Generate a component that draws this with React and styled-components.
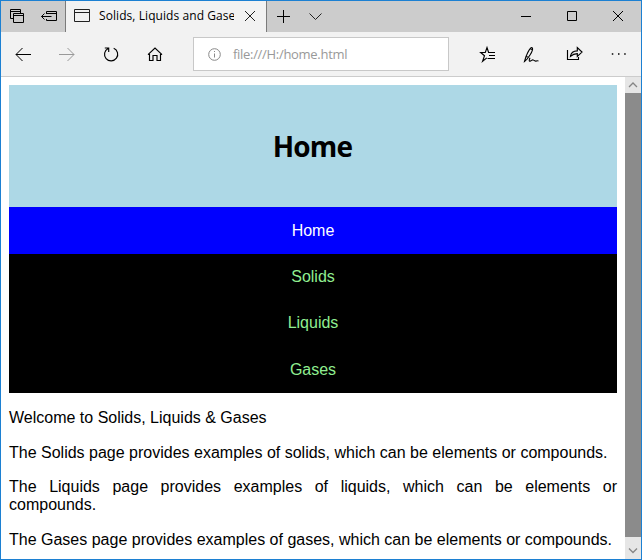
import React from "react";
import styled, { createGlobalStyle } from "styled-components";

const GlobalStyle = createGlobalStyle`
  * { box-sizing: border-box; }
  body { margin: 0; overflow: hidden; }
`;

const BrowserWindow = styled.div`
  display: flex;
  flex-direction: column;
  width: 642px;
  height: 560px;
  border: 1px solid #1c80d2;
  background: #fff;
  overflow: hidden;
`;

const TitleBar = styled.header`
  display: flex;
  flex: 0 0 31px;
  background: #ccc;
`;

const Spacer = styled.div`
  flex: 1;
`;

const Tab = styled.div`
  display: flex;
  width: 202px;
  background: #f2f2f2;
  border-left: 1px solid #7b7b7b;
  border-right: 1px solid #7b7b7b;
`;

const TabTitle = styled.div`
  width: 135px;
  margin-right: 1px;
  overflow: hidden;
  white-space: nowrap;
  font: 12px/30px "Open Sans", "Noto Sans", sans-serif;
  letter-spacing: 0.07px;
  color: #000;
`;

const Toolbar = styled.nav`
  display: flex;
  flex: 0 0 45px;
  background: #f2f2f2;
  border-bottom: 1px solid #ccc;
`;

const AddressBar = styled.div`
  display: flex;
  width: 256px;
  height: 34px;
  margin: 5px 16px 0;
  background: #fff;
  border: 1px solid #c8c8c8;
`;

const Address = styled.span`
  font: 13px/33px "Open Sans", "Noto Sans", sans-serif;
  letter-spacing: -0.3px;
  color: #999;
`;

const IconSvg = styled.svg`
  display: block;
  flex: none;
  fill: none;
  stroke: ${(p) => p.$color || "#000"};
  stroke-width: ${(p) => p.$weight || 1};
`;

const Viewport = styled.div`
  display: flex;
  flex: 1;
  min-height: 0;
`;

const Page = styled.main`
  flex: 1;
  padding: 8px 8px 0;
  overflow: hidden;
  font: 16px/18.4px "Liberation Sans", Arial, sans-serif;
  color: #000;
`;

const Banner = styled.div`
  display: flex;
  align-items: center;
  justify-content: center;
  height: 122px;
  background: #add8e6;
`;

const Heading = styled.h1`
  margin: 0;
  font: 700 28px/38px "Open Sans", "Noto Sans", sans-serif;
  letter-spacing: -0.8px;
  padding-right: 1px;
`;

const Menu = styled.ul`
  display: grid;
  grid-template-rows: 47px 46px 46px 47px;
  margin: 0;
  padding: 0;
  list-style: none;
  background: #000;
`;

const MenuItem = styled.li`
  display: grid;
  place-items: end center;
  line-height: 46px;
  color: ${(p) => (p.$active ? "#fff" : "#90ee90")};
  background: ${(p) => (p.$active ? "#00f" : "#000")};
`;

const Paragraph = styled.p`
  margin: 0 0 16px;
  text-align: justify;
`;

const Article = styled.article`
  padding-top: 16.2px;
`;

const Scrollbar = styled.div`
  display: flex;
  flex-direction: column;
  width: 16px;
  background: #e6e6e6;
`;

const ScrollThumb = styled.div`
  height: 444px;
  background: #8b8b8b;
`;

/* Icon paths use window coordinates; x, y, w and h select the slot they occupy. */
function Icon({ x, y, w, h, color, weight, children }) {
  return (
    <IconSvg width={w} height={h} viewBox={`${x} ${y} ${w} ${h}`} $color={color} $weight={weight}>
      {children}
    </IconSvg>
  );
}

function TitleIcon(props) {
  return <Icon y={1} h={31} {...props} />;
}

function ToolIcon(props) {
  return <Icon y={32} h={44} w={44} {...props} />;
}

const menu = ["Home", "Solids", "Liquids", "Gases"];

const paragraphs = [
  "Welcome to Solids, Liquids & Gases",
  "The Solids page provides examples of solids, which can be elements or compounds.",
  "The Liquids page provides examples of liquids, which can be elements or compounds.",
  "The Gases page provides examples of gases, which can be elements or compounds.",
];

export default function App() {
  return (
    <>
      <GlobalStyle />
      <BrowserWindow>
        <TitleBar>
          <TitleIcon x={1} w={32}>
            <path d="M13 18.500h-2.500v-9h10v3.500M10.500 11.500h10M13.500 13.500h10v9h-10zM13.500 15.500h10" />
          </TitleIcon>
          <TitleIcon x={33} w={32}>
            <path d="M46.500 14v-2.500h10v9h-10V19M46.500 13.500h10M41.500 16.500h10M44.500 13.500l-3 3 3 3" />
          </TitleIcon>
          <Tab>
            <TitleIcon x={66} w={33} color="#222">
              <path d="M74.500 9.500h15v12h-15zM74.500 12.500h15" />
            </TitleIcon>
            <TabTitle>Solids, Liquids and Gases</TabTitle>
            <TitleIcon x={235} w={31} color="#222">
              <path d="M245 11l10 10M255 11l-10 10" />
            </TitleIcon>
          </Tab>
          <TitleIcon x={267} w={33}>
            <path d="M277 16.500h13M283.500 10v13" />
          </TitleIcon>
          <TitleIcon x={300} w={31} color="#222">
            <path d="M309.500 13.500l6 6 6-6" />
          </TitleIcon>
          <Spacer />
          <TitleIcon x={503} w={46}>
            <path d="M521 16.500h10" />
          </TitleIcon>
          <TitleIcon x={549} w={46}>
            <path d="M567.500 11.500h9v9h-9z" />
          </TitleIcon>
          <TitleIcon x={595} w={46}>
            <path d="M613 11l10 10M623 11l-10 10" />
          </TitleIcon>
        </TitleBar>
        <Toolbar>
          <ToolIcon x={1}>
            <path d="M16 54.500h15M22.500 48l-6.500 6.500 6.500 6.500" />
          </ToolIcon>
          <ToolIcon x={45} color="#999">
            <path d="M59 54.500h15M67.500 48l6.500 6.500-6.500 6.500" />
          </ToolIcon>
          <ToolIcon x={89} weight={1.150}>
            <path d="M113.700 48.200a6.600 6.600 0 1 1-5.600.200M104.800 48h3.900v3.900" />
          </ToolIcon>
          <ToolIcon x={133} weight={1.150}>
            <path d="M148 54.700l7-6.700 7 6.700M149.500 54v6.500h3.500v-5h4v5h3.500V54" />
          </ToolIcon>
          <AddressBar>
            <Icon x={194} y={38} w={39} h={32} color="#888">
              <circle cx="214.500" cy="54.500" r="5.800" />
              <path d="M214.500 53.500v4M214.500 51v1" />
            </Icon>
            <Address>file:///H:/home.html</Address>
          </AddressBar>
          <ToolIcon x={465} weight={1.150}>
            <path d="M490.500 52.500h-1.900l-1.600-5-1.700 5h-4.600l3.800 3.200-1.900 5.600 4.200-3.400M488 52.500h7M489 55.500h6M487.500 58.500h7.500" />
          </ToolIcon>
          <ToolIcon x={509} weight={1.100}>
            <path d="M524.500 61.500l1.500-5c1.800-4.300 3.500-8.500 5.500-8.900 2.200 0 .700 4.200-1.500 7.400-1.500 2.500-2.800 4.800-5.500 6.500zM526.500 56.500l2 .900M530 48.500l1.900 1M530 57.700c-1 2.300-1.200 4.200.500 3.300 1.500-.8 2-1.800 3.100-.8 1.200 1 1.700 1.300 2.800.7.700-.4 1.200-.2 2.100.1" />
          </ToolIcon>
          <ToolIcon x={553} weight={1.150}>
            <path d="M567.500 50v9.500h11V57M570.500 56.300c.5-3.700 2.600-5.500 6.800-5.500v-3.100l4.700 4.400-4.700 4.400v-2.900c-3 0-4.800.8-6.800 2.700z" />
          </ToolIcon>
          <ToolIcon x={597} weight={1.500}>
            <path d="M611.800 54h1.500M618 54h1.500M624.200 54h1.500" />
          </ToolIcon>
        </Toolbar>
        <Viewport>
          <Page>
            <Banner>
              <Heading>Home</Heading>
            </Banner>
            <Menu>
              {menu.map((label, i) => (
                <MenuItem key={label} $active={i === 0}>{label}</MenuItem>
              ))}
            </Menu>
            <Article>
              {paragraphs.map((text) => (
                <Paragraph key={text}>{text}</Paragraph>
              ))}
            </Article>
          </Page>
          <Scrollbar>
            <Icon x={625} y={77} w={16} h={16} color="#858585" weight={1.300}>
              <path d="M629 87l4-4 4 4" />
            </Icon>
            <ScrollThumb />
            <Icon x={625} y={537} w={16} h={22} color="#858585" weight={1.300}>
              <path d="M629 548.500l4 4 4-4" />
            </Icon>
          </Scrollbar>
        </Viewport>
      </BrowserWindow>
    </>
  );
}
